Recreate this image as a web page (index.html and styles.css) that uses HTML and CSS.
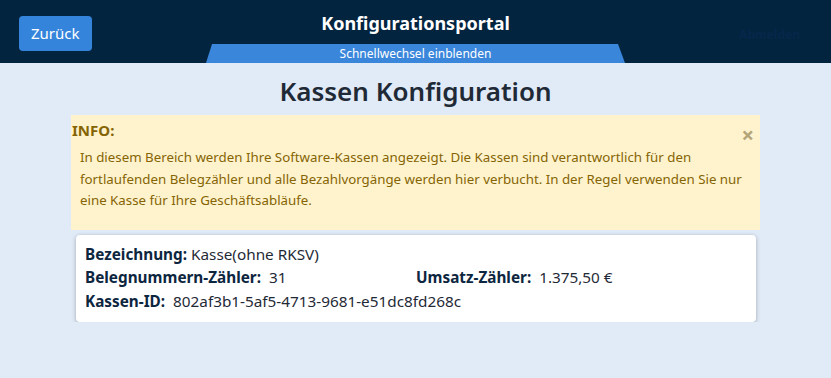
FILE: index.html
```html
<!DOCTYPE html>
<html lang="de">
<head>
  <meta charset="UTF-8" />
  <title>Kassen Konfiguration</title>
  <link rel="stylesheet" href="styles.css">
</head>
<body>

  <header class="topbar">
    <div class="topbar-left">
      <a class="btn-back" href="#">Zurück</a>
    </div>
    <div class="topbar-center">
      <div class="portal-title">Konfigurationsportal</div>
      <div class="quick-tab">Schnellwechsel einblenden</div>
    </div>
    <div class="topbar-right">
      <span class="ghost-link">Abmelden</span>
    </div>
  </header>

  <main class="content">
    <h1>Kassen Konfiguration</h1>

    <div class="alert-info">
      <div class="alert-head">
        <strong>INFO:</strong>
        <span class="alert-close">&times;</span>
      </div>
      <p class="alert-text">
        In diesem Bereich werden Ihre Software-Kassen angezeigt. Die Kassen sind verantwortlich für den<br>
        fortlaufenden Belegzähler und alle Bezahlvorgänge werden hier verbucht. In der Regel verwenden Sie nur<br>
        eine Kasse für Ihre Geschäftsabläufe.
      </p>
    </div>

    <div class="kasse-card">
      <div class="row"><b>Bezeichnung:</b> Kasse(ohne RKSV)</div>
      <div class="row two-col">
        <div><b>Belegnummern-Zähler:</b>&nbsp; 31</div>
        <div><b>Umsatz-Zähler:</b>&nbsp; 1.375,50 €</div>
      </div>
      <div class="row"><b>Kassen-ID:</b>&nbsp; 802af3b1-5af5-4713-9681-e51dc8fd268c</div>
    </div>
  </main>

</body>
</html>
```

FILE: styles.css
```css
body {
  font-family: 'Noto Sans', 'Open Sans', sans-serif;
  margin: 0;
  background: #e1ebf8;
  color: #1f2a36;
}

/* Header */
.topbar {
  display: grid;
  grid-template-columns: 1fr auto 1fr;
  height: 63px;
  background: #03243f;
  padding: 0 19px;
}

.topbar-left {
  display: flex;
  align-items: flex-start;
  padding-top: 16px;
}

.btn-back {
  display: inline-block;
  background: #3584dc;
  color: white;
  font-size: 15px;
  line-height: 35px;
  padding: 0 12px;
  border-radius: 4px;
  text-decoration: none;
}

.topbar-center {
  display: flex;
  flex-direction: column;
  align-items: center;
  justify-content: space-between;
}

.portal-title {
  color: white;
  font-weight: 700;
  font-size: 18px;
  margin-top: 11px;
}

.quick-tab {
  width: 419px;
  height: 19px;
  line-height: 19px;
  background: #3a86db;
  color: white;
  font-size: 12px;
  text-align: center;
  clip-path: polygon(6px 0, calc(100% - 7px) 0, 100% 100%, 0 100%);
  margin-top: auto;
}

.topbar-right {
  display: flex;
  justify-content: flex-end;
  padding-top: 26px;
  padding-right: 12px;
}

.ghost-link {
  color: #06274a;
  font-size: 12px;
  font-weight: 700;
}

/* Content */
.content {
  padding: 0 71px;
}

h1 {
  margin: 11px 0 7px;
  font-size: 26px;
  font-weight: 600;
  text-align: center;
  line-height: 34px;
}

.alert-info {
  background: #fff3cd;
  color: #856404;
}

.alert-head {
  display: flex;
  justify-content: space-between;
  align-items: flex-start;
  padding: 5px 6px 0 1px;
  font-size: 15px;
  line-height: 20px;
}

.alert-close {
  color: #b3a479;
  font-size: 22px;
  font-weight: 700;
  line-height: 20px;
  margin-top: 4px;
}

.alert-text {
  margin: -5px 0 0;
  padding: 8px 9px 18px;
  font-size: 13.3px;
  line-height: 21.5px;
}

.kasse-card {
  margin: 5px 4px 0 5px;
  background: white;
  border-radius: 4px;
  box-shadow: 0 1px 4px rgba(0, 0, 0, 0.3);
  padding: 8px 9px 9px;
  font-size: 15.3px;
  line-height: 23.5px;
}

.kasse-card b {
  color: #0d2640;
}

.two-col {
  display: grid;
  grid-template-columns: 331px 1fr;
}
```
